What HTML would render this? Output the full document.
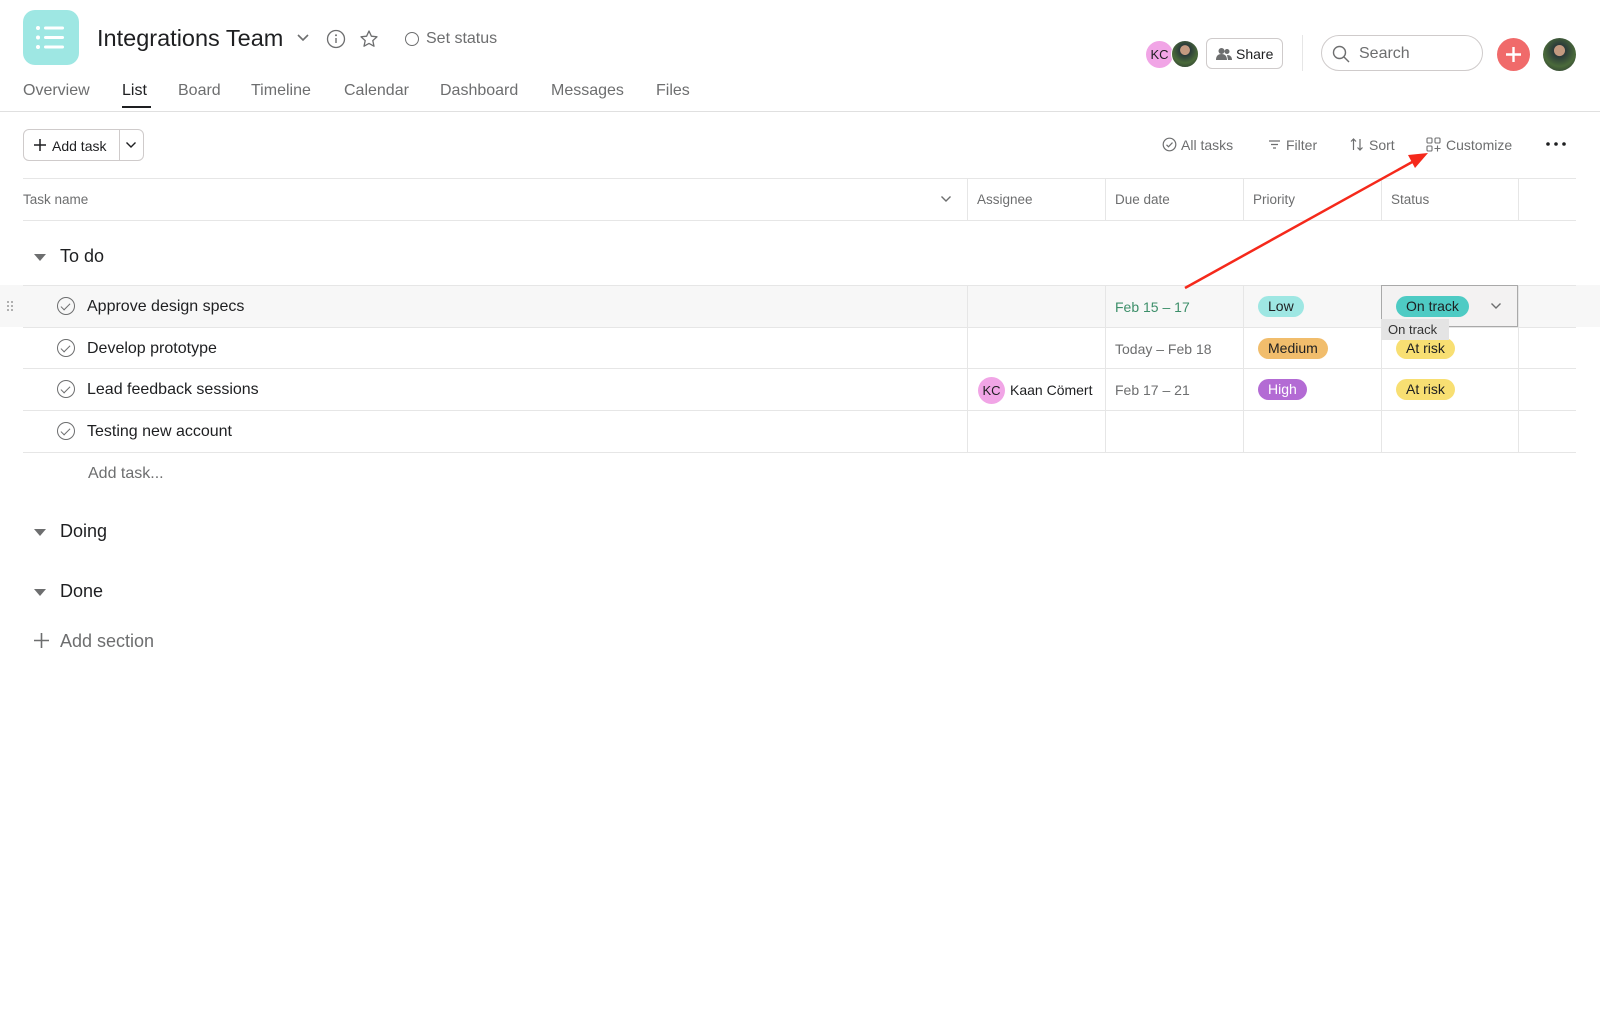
<!DOCTYPE html>
<html><head><meta charset="utf-8"><style>
*{box-sizing:border-box;margin:0;padding:0}
body{width:1600px;height:1011px;background:#fff;font-family:"Liberation Sans",sans-serif;color:#1e1f21;position:relative;overflow:hidden}
.a{position:absolute;white-space:nowrap}
.tab{position:absolute;top:82px;font-size:16px;color:#6d6e6f}
.col{position:absolute;top:178px;height:274px;width:1px;background:#e6e6e6}
.hl{position:absolute;left:23px;width:1553px;height:1px;background:#e6e6e6}
.th{position:absolute;top:192px;font-size:13.5px;color:#6d6e6f}
.chk{position:absolute;left:57px;width:18px;height:18px;border:1.3px solid #6d6e6f;border-radius:50%}
.chk:after{content:"";position:absolute;left:5px;top:3px;width:4px;height:8px;border:solid #6d6e6f;border-width:0 1.3px 1.3px 0;transform:rotate(45deg)}
.task{position:absolute;left:87px;font-size:16px}
.pill{position:absolute;height:21px;border-radius:11px;font-size:14px;line-height:21px;padding:0 10px}
.date{position:absolute;left:1115px;font-size:14px;color:#6d6e6f}
.sec{position:absolute;left:60px;font-size:18px;font-weight:500}
.tri{position:absolute;left:34px;width:0;height:0;border-left:6px solid transparent;border-right:6px solid transparent;border-top:7px solid #6d6e6f}
.tb{position:absolute;top:137px;font-size:14px;color:#6d6e6f}
</style></head><body>
<div class="a" style="left:23px;top:10px;width:56px;height:55px;border-radius:12px;background:#9ee7e3"></div>
<svg class="a" style="left:23px;top:10px" width="56" height="55"><g fill="#fff"><circle cx="15" cy="18" r="2"/><circle cx="15" cy="27.5" r="2"/><circle cx="15" cy="37" r="2"/><rect x="21" y="16.5" width="20" height="3" rx="1.5"/><rect x="21" y="26" width="20" height="3" rx="1.5"/><rect x="21" y="35.5" width="20" height="3" rx="1.5"/></g></svg>
<div class="a" style="left:97px;top:25px;font-size:23.5px;color:#1e1f21">Integrations Team</div>
<svg class="a" style="left:296px;top:33px" width="14" height="10"><path d="M2 2l5 5 5-5" stroke="#6d6e6f" stroke-width="1.6" fill="none"/></svg>
<svg class="a" style="left:326px;top:29px" width="20" height="20"><circle cx="10" cy="10" r="8.5" stroke="#6d6e6f" stroke-width="1.3" fill="none"/><path d="M10 9v5" stroke="#6d6e6f" stroke-width="1.4"/><circle cx="10" cy="6.3" r="1" fill="#6d6e6f"/></svg>
<svg class="a" style="left:359px;top:29px" width="20" height="20"><path d="M10 2l2.4 5.2 5.6.6-4.2 3.8 1.2 5.6L10 14.4 5 17.2l1.2-5.6L2 7.8l5.6-.6z" stroke="#6d6e6f" stroke-width="1.3" fill="none" stroke-linejoin="round"/></svg>
<div class="a" style="left:405px;top:32px;width:14px;height:14px;border:1.3px solid #6d6e6f;border-radius:50%"></div>
<div class="a" style="left:426px;top:30px;font-size:16px;color:#6d6e6f">Set status</div>
<div class="tab" style="left:23px">Overview</div>
<div class="tab" style="left:122px;color:#1e1f21">List</div>
<div class="a" style="left:122px;top:106px;width:29px;height:2px;background:#1e1f21"></div>
<div class="tab" style="left:178px">Board</div>
<div class="tab" style="left:251px">Timeline</div>
<div class="tab" style="left:344px">Calendar</div>
<div class="tab" style="left:440px">Dashboard</div>
<div class="tab" style="left:551px">Messages</div>
<div class="tab" style="left:656px">Files</div>
<div class="a" style="left:0;top:111px;width:1600px;height:1px;background:#e0e0e0"></div>
<div class="a" style="left:1146px;top:41px;width:27px;height:27px;border-radius:50%;background:#f1a5e6;font-size:13px;line-height:27px;text-align:center">KC</div>
<div class="a" style="left:1171px;top:40px;width:28px;height:28px;border-radius:50%;background:radial-gradient(circle at 50% 35%,#c49a80 0 22%,#2b3a3a 24%,#4a6a3a 60%,#263030);border:1px solid #fff"></div>
<div class="a" style="left:1206px;top:38px;width:77px;height:31px;border:1px solid #cfcbcb;border-radius:6px"></div>
<svg class="a" style="left:1216px;top:47px" width="16" height="14"><circle cx="5.5" cy="4" r="3" fill="#6d6e6f"/><circle cx="11" cy="4.5" r="2.5" fill="#6d6e6f"/><path d="M0 13c0-4 2-6 5.5-6s5.5 2 5.5 6z M11 8c3 0 5 1.5 5 5h-4z" fill="#6d6e6f"/></svg>
<div class="a" style="left:1236px;top:46px;font-size:14px">Share</div>
<div class="a" style="left:1302px;top:35px;width:1px;height:36px;background:#e6e6e6"></div>
<div class="a" style="left:1321px;top:35px;width:162px;height:36px;border:1px solid #cfcbcb;border-radius:18px"></div>
<svg class="a" style="left:1332px;top:45px" width="18" height="18"><circle cx="7.5" cy="7.5" r="6" stroke="#6d6e6f" stroke-width="1.4" fill="none"/><path d="M12 12l5 5" stroke="#6d6e6f" stroke-width="1.4"/></svg>
<div class="a" style="left:1359px;top:45px;font-size:16px;color:#6d6e6f">Search</div>
<div class="a" style="left:1497px;top:38px;width:33px;height:33px;border-radius:50%;background:#f06a6a"></div>
<svg class="a" style="left:1497px;top:38px" width="33" height="33"><path d="M16.5 9v15M9 16.5h15" stroke="#fff" stroke-width="2.4"/></svg>
<div class="a" style="left:1543px;top:38px;width:33px;height:33px;border-radius:50%;background:radial-gradient(circle at 50% 38%,#c49a80 0 20%,#2b3a3a 22%,#4a6a3a 60%,#263030)"></div>
<div class="a" style="left:23px;top:129px;width:121px;height:32px;border:1px solid #cfcbcb;border-radius:6px"></div>
<div class="a" style="left:119px;top:129px;width:1px;height:32px;background:#cfcbcb"></div>
<svg class="a" style="left:33px;top:138px" width="14" height="14"><path d="M7 1v12M1 7h12" stroke="#1e1f21" stroke-width="1.5"/></svg>
<div class="a" style="left:52px;top:138px;font-size:14px">Add task</div>
<svg class="a" style="left:125px;top:141px" width="12" height="8"><path d="M1.5 1.5l4.5 4.5 4.5-4.5" stroke="#1e1f21" stroke-width="1.4" fill="none"/></svg>
<svg class="a" style="left:1162px;top:137px" width="15" height="15"><circle cx="7.5" cy="7.5" r="6.3" stroke="#6d6e6f" stroke-width="1.2" fill="none"/><path d="M4.5 7.8l2 2 4-4.2" stroke="#6d6e6f" stroke-width="1.2" fill="none"/></svg>
<div class="tb" style="left:1181px">All tasks</div>
<svg class="a" style="left:1268px;top:139px" width="13" height="11"><path d="M1 2h11M3 5.5h7M5 9h3" stroke="#6d6e6f" stroke-width="1.2"/></svg>
<div class="tb" style="left:1286px">Filter</div>
<svg class="a" style="left:1350px;top:138px" width="14" height="13"><path d="M3.5 12V1M1 3.5l2.5-2.5 2.5 2.5M10 1v11M7.5 9.5l2.5 2.5 2.5-2.5" stroke="#6d6e6f" stroke-width="1.2" fill="none"/></svg>
<div class="tb" style="left:1369px">Sort</div>
<svg class="a" style="left:1426px;top:137px" width="16" height="16"><rect x="1" y="1" width="5" height="5" rx="1" stroke="#6d6e6f" fill="none" stroke-width="1.1"/><rect x="9" y="1" width="5" height="5" rx="1" stroke="#6d6e6f" fill="none" stroke-width="1.1"/><rect x="1" y="9" width="5" height="5" rx="1" stroke="#6d6e6f" fill="none" stroke-width="1.1"/><path d="M11.5 8.5v6M8.5 11.5h6" stroke="#6d6e6f" stroke-width="1.1"/></svg>
<div class="tb" style="left:1446px">Customize</div>
<svg class="a" style="left:1545px;top:141px" width="22" height="6"><circle cx="3" cy="3" r="1.8" fill="#1e1f21"/><circle cx="11" cy="3" r="1.8" fill="#1e1f21"/><circle cx="19" cy="3" r="1.8" fill="#1e1f21"/></svg>
<div class="a" style="left:0;top:285px;width:1600px;height:42px;background:#f7f7f7"></div>
<div class="hl" style="top:178px"></div>
<div class="hl" style="top:220px"></div>
<div class="hl" style="top:285px"></div>
<div class="hl" style="top:327px"></div>
<div class="hl" style="top:368px"></div>
<div class="hl" style="top:410px"></div>
<div class="hl" style="top:452px"></div>
<div class="a" style="left:0;top:221px;width:1600px;height:64px;background:#fff"></div>
<div class="col" style="left:967px"></div>
<div class="col" style="left:1105px"></div>
<div class="col" style="left:1243px"></div>
<div class="col" style="left:1381px"></div>
<div class="col" style="left:1518px"></div>
<div class="a" style="left:967px;top:221px;width:560px;height:64px;background:#fff"></div>
<div class="th" style="left:23px">Task name</div>
<svg class="a" style="left:940px;top:195px" width="12" height="8"><path d="M1.5 1.5l4.5 4.5 4.5-4.5" stroke="#6d6e6f" stroke-width="1.4" fill="none"/></svg>
<div class="th" style="left:977px">Assignee</div>
<div class="th" style="left:1115px">Due date</div>
<div class="th" style="left:1253px">Priority</div>
<div class="th" style="left:1391px">Status</div>
<div class="tri" style="top:254px"></div>
<div class="sec" style="top:246px">To do</div>
<svg class="a" style="left:6px;top:300px" width="8" height="12"><g fill="#9a9a9a"><circle cx="2" cy="2" r="1"/><circle cx="6" cy="2" r="1"/><circle cx="2" cy="6" r="1"/><circle cx="6" cy="6" r="1"/><circle cx="2" cy="10" r="1"/><circle cx="6" cy="10" r="1"/></g></svg>
<div class="chk" style="top:297px"></div><div class="task" style="top:298px">Approve design specs</div>
<div class="chk" style="top:339px"></div><div class="task" style="top:340px">Develop prototype</div>
<div class="chk" style="top:380px"></div><div class="task" style="top:381px">Lead feedback sessions</div>
<div class="chk" style="top:422px"></div><div class="task" style="top:423px">Testing new account</div>
<div class="a" style="left:88px;top:465px;font-size:16px;color:#6d6e6f">Add task...</div>
<div class="date" style="top:299px;color:#3d8f6a">Feb 15 – 17</div>
<div class="date" style="top:341px">Today – Feb 18</div>
<div class="date" style="top:382px">Feb 17 – 21</div>
<div class="a" style="left:978px;top:377px;width:27px;height:27px;border-radius:50%;background:#f1a5e6;font-size:13px;line-height:27px;text-align:center">KC</div>
<div class="a" style="left:1010px;top:382px;font-size:14px">Kaan Cömert</div>
<div class="pill" style="left:1258px;top:296px;background:#9ee7e3">Low</div>
<div class="pill" style="left:1258px;top:338px;background:#f1bd6c">Medium</div>
<div class="pill" style="left:1258px;top:379px;background:#b36bd4;color:#fff">High</div>
<div class="a" style="left:1381px;top:285px;width:137px;height:42px;border:1px solid #a9a9a9;background:#f3f2f2"></div>
<div class="pill" style="left:1396px;top:296px;background:#4ecbc4">On track</div>
<svg class="a" style="left:1490px;top:302px" width="12" height="8"><path d="M1.5 1.5l4.5 4.5 4.5-4.5" stroke="#6d6e6f" stroke-width="1.4" fill="none"/></svg>
<div class="pill" style="left:1396px;top:338px;background:#f8df72">At risk</div>
<div class="pill" style="left:1396px;top:379px;background:#f8df72">At risk</div>
<div class="a" style="left:1381px;top:319px;width:68px;height:21px;background:#e4e4e4;font-size:13px;line-height:21px;padding-left:7px;color:#333">On track</div>
<div class="tri" style="top:529px"></div>
<div class="sec" style="top:521px">Doing</div>
<div class="tri" style="top:589px"></div>
<div class="sec" style="top:581px">Done</div>
<svg class="a" style="left:34px;top:633px" width="15" height="15"><path d="M7.5 0v15M0 7.5h15" stroke="#6d6e6f" stroke-width="1.6"/></svg>
<div class="a" style="left:60px;top:631px;font-size:18px;color:#6d6e6f">Add section</div>
<svg class="a" style="left:0;top:0" width="1600" height="1011"><line x1="1185" y1="288" x2="1414" y2="161" stroke="#f5291b" stroke-width="2.5"/><path d="M1428 153l-20 2 7 13z" fill="#f5291b"/></svg>
</body></html>
